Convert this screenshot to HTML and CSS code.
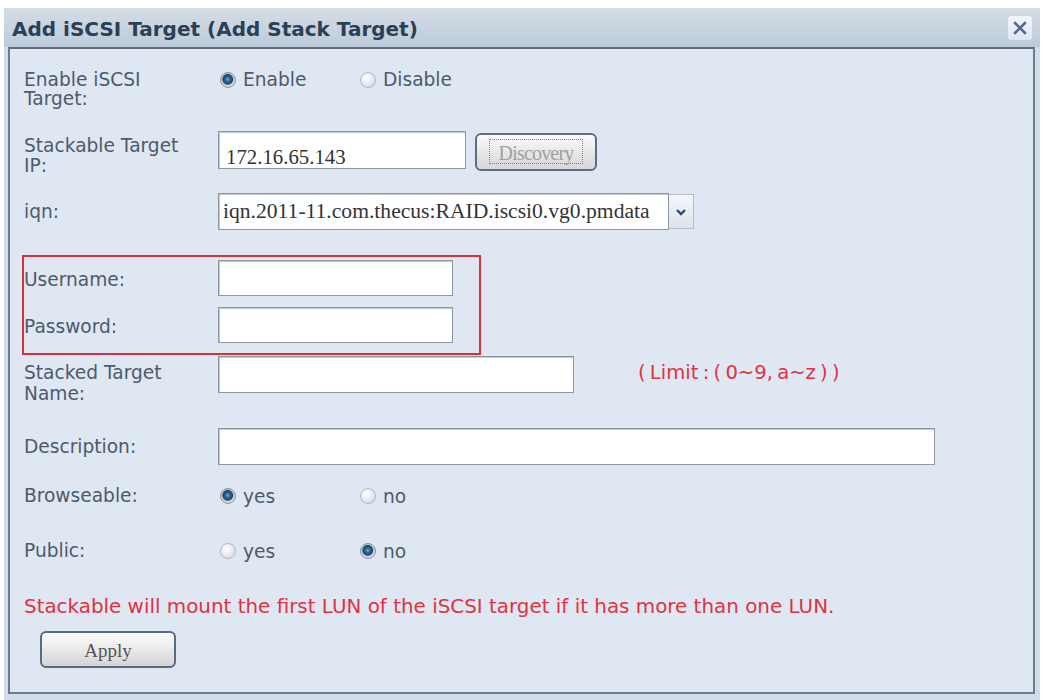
FILE: index.html
```html
<!DOCTYPE html>
<html>
<head>
    <meta charset="utf-8" />
    <title>Add iSCSI Target</title>
    <link rel="stylesheet" href="styles.css">
</head>
<body>
    <div class="dialog">
        <div class="titlebar">
            <span class="title">Add iSCSI Target (Add Stack Target)</span>
            <span class="close">
                <svg width="16" height="16" viewBox="0 0 16 16">
                    <path d="M3 3 L13 13 M13 3 L3 13" stroke="#56678c" stroke-width="2.6" stroke-linecap="round" />
                </svg>
            </span>
        </div>

        <div class="panel">
            <div class="row row-enable">
                <div class="label">Enable iSCSI<br>Target:</div>
                <div class="opts">
                    <span class="opt"><span class="radio on"></span>Enable</span>
                    <span class="opt"><span class="radio"></span>Disable</span>
                </div>
            </div>

            <div class="row row-ip">
                <div class="label">Stackable Target<br>IP:</div>
                <div class="input ip">172.16.65.143</div>
                <button class="discovery"><span>Discovery</span></button>
            </div>

            <div class="row row-iqn">
                <div class="label">iqn:</div>
                <div class="select">
                    <div class="select-text">iqn.2011-11.com.thecus:RAID.iscsi0.vg0.pmdata</div>
                    <div class="select-arrow">
                        <svg width="12" height="8" viewBox="0 0 12 8">
                            <path d="M2 2 L6 6 L10 2" stroke="#2c4a82" stroke-width="2.4" fill="none" />
                        </svg>
                    </div>
                </div>
            </div>

            <div class="mark">
                <div class="row row-user">
                    <div class="label">Username:</div>
                    <div class="input short"></div>
                </div>
                <div class="row row-pass">
                    <div class="label">Password:</div>
                    <div class="input short"></div>
                </div>
            </div>

            <div class="row row-name">
                <div class="label">Stacked Target<br>Name:</div>
                <div class="input name"></div>
                <div class="limit">( Limit : ( 0~9, a~z ) )</div>
            </div>

            <div class="row row-desc">
                <div class="label">Description:</div>
                <div class="input desc"></div>
            </div>

            <div class="row row-browse">
                <div class="label">Browseable:</div>
                <div class="opts">
                    <span class="opt"><span class="radio on"></span>yes</span>
                    <span class="opt"><span class="radio"></span>no</span>
                </div>
            </div>

            <div class="row row-public">
                <div class="label">Public:</div>
                <div class="opts">
                    <span class="opt"><span class="radio"></span>yes</span>
                    <span class="opt"><span class="radio on"></span>no</span>
                </div>
            </div>

            <div class="note">Stackable will mount the first LUN of the iSCSI target if it has more than one LUN.</div>

            <button class="apply">Apply</button>
        </div>
    </div>
</body>
</html>
```

FILE: styles.css
```css
body {
    margin: 0;
    padding: 0;
    background: #ffffff;
    font-family: "DejaVu Sans", Verdana, sans-serif;
    overflow: hidden;
}

.dialog {
    margin: 8px 8px 0 4px;
    width: 1036px;
    height: 692px;
    background: #d3dde9;
    box-sizing: border-box;
    padding: 0 5px 0 4px;
    display: flex;
    flex-direction: column;
}

.titlebar {
    height: 39px;
    display: flex;
    align-items: center;
    justify-content: space-between;
    padding: 0 4px 0 4px;
    background: linear-gradient(#d6dde6, #bccbda);
    margin: 0 -5px 0 -4px;
}

.title {
    font-weight: bold;
    font-size: 20px;
    color: #2b3f57;
    padding-left: 4px;
    padding-top: 2px;
}

.close {
    width: 24px;
    height: 24px;
    display: flex;
    align-items: center;
    justify-content: center;
    background: linear-gradient(#f2f6fb, #dde6f1);
    border-radius: 3px;
    margin-right: 4px;
}

.panel {
    flex: 1;
    background: #dfe7f2;
    border: 2px solid #6e7b8b;
    border-top-color: #5f6c7c;
    padding: 21px 0 0 14px;
    margin-bottom: 6px;
}

.row {
    display: flex;
    align-items: center;
}

.label {
    width: 194px;
    flex: none;
    font-size: 18.6px;
    line-height: 20px;
    color: #4d5b6d;
    white-space: nowrap;
}

.opts {
    display: flex;
}

.opt {
    width: 140px;
    display: flex;
    align-items: center;
    font-size: 18.6px;
    color: #4d5b6d;
}

.radio {
    flex: none;
    width: 16px;
    height: 16px;
    border-radius: 50%;
    margin: 0 7px 0 2px;
    border: 1px solid #b0b8c2;
    background: radial-gradient(circle at 40% 35%, #ffffff, #e4e8ec 55%, #c9d0d8);
    box-sizing: border-box;
}

.radio.on {
    border: 1px solid #8893a0;
    background: radial-gradient(circle at 48% 45%, #7eb0d0 0, #2a6890 22%, #16476b 46%, #b9c3cd 54%, #eef1f4 78%);
}

.row-enable {
    align-items: flex-start;
    height: 38px;
}

.row-enable .label {
    line-height: 19px;
}

.row-enable .opts {
    height: 19px;
    align-items: center;
}

.row-ip {
    margin-top: 23px;
    align-items: flex-start;
}

.row-ip .label {
    padding-top: 5px;
}

.input {
    height: 38px;
    box-sizing: border-box;
    background: #ffffff;
    border: 1px solid #8e98a3;
    box-shadow: inset 1px 1px 0 #c2c8ce;
    font-family: "Liberation Serif", "Times New Roman", serif;
    font-size: 20.8px;
    color: #333;
    padding: 13px 0 0 7px;
}

.ip {
    width: 248px;
}

.discovery {
    margin: 2px 0 0 9px;
    width: 122px;
    height: 38px;
    border: 2px solid #5d6e83;
    border-radius: 6px;
    background: linear-gradient(#fbfbfb, #e6e6e6 55%, #d7d7d7);
    padding: 4px 12px 5px;
    display: flex;
}

.discovery span {
    flex: 1;
    border: 1px dotted #7e7e7e;
    font-family: "Liberation Serif", "Times New Roman", serif;
    font-size: 20px;
    color: #a0a0a0;
    display: flex;
    align-items: center;
    justify-content: center;
    letter-spacing: -0.8px;
    padding-top: 3px;
}

.row-iqn {
    margin-top: 17px;
}

.select {
    display: flex;
    height: 37px;
}

.select-text {
    width: 451px;
    box-sizing: border-box;
    background: #ffffff;
    border: 1px solid #8e98a3;
    box-shadow: inset 1px 1px 0 #c2c8ce;
    font-family: "Liberation Serif", "Times New Roman", serif;
    font-size: 21.6px;
    color: #333;
    padding: 5px 0 0 4px;
    white-space: nowrap;
    overflow: hidden;
}

.select-arrow {
    width: 24px;
    margin: 1px 0;
    border: 1px solid #b5bec8;
    border-left: none;
    background: linear-gradient(#f4f7fa, #dce3ea);
    display: flex;
    align-items: center;
    justify-content: center;
}

.mark {
    margin: 25px 0 0 -2px;
    width: 459px;
    height: 100px;
    box-sizing: border-box;
    border: 2px solid #d9303b;
    padding-top: 3px;
}

.short {
    width: 235px;
    height: 36px;
}

.row-pass {
    margin-top: 11px;
}

.mark .label {
    padding-top: 4px;
}

.row-name {
    margin-top: 1px;
    align-items: flex-start;
}

.row-name .label {
    padding-top: 6px;
    line-height: 21px;
}

.name {
    width: 356px;
    height: 37px;
}

.limit {
    margin-left: 64px;
    padding-top: 5px;
    font-size: 19.6px;
    color: #e0323f;
    word-spacing: -2px;
}

.row-desc {
    margin-top: 24px;
}

.desc {
    width: 717px;
    height: 37px;
}

.row-browse {
    margin-top: 16px;
    height: 30px;
}

.row-public {
    margin-top: 25px;
    height: 30px;
}

.note {
    margin-top: 29px;
    line-height: 24px;
    font-size: 19.9px;
    color: #e0323f;
    white-space: nowrap;
}

.apply {
    display: block;
    margin: 12px 0 0 16px;
    width: 136px;
    height: 37px;
    border: 2px solid #5a6b80;
    border-radius: 6px;
    background: linear-gradient(#fcfcfc, #e8e8e8 55%, #d4d4d4);
    font-family: "Liberation Serif", "Times New Roman", serif;
    font-size: 19px;
    color: #555;
    padding-top: 4px;
}
```
